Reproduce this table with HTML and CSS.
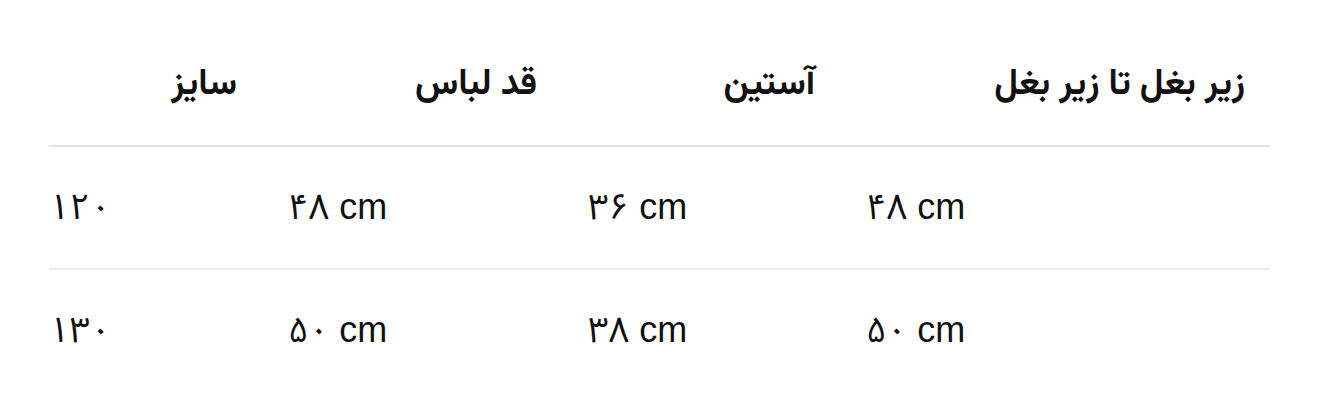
FILE: index.html
```html
<!DOCTYPE html>
<html lang="fa">
<head>
<meta charset="utf-8">
<link rel="stylesheet" href="styles.css">
</head>
<body>
<table class="size-table">
  <colgroup>
    <col class="c1"><col class="c2"><col class="c3"><col class="c4">
  </colgroup>
  <thead>
    <tr>
      <th>سایز</th>
      <th>قد لباس</th>
      <th>آستین</th>
      <th class="last">زیر بغل تا زیر بغل</th>
    </tr>
  </thead>
  <tbody>
    <tr>
      <td>۱۲۰</td>
      <td>۴۸ cm</td>
      <td>۳۶ cm</td>
      <td>۴۸ cm</td>
    </tr>
    <tr>
      <td>۱۳۰</td>
      <td>۵۰ cm</td>
      <td>۳۸ cm</td>
      <td>۵۰ cm</td>
    </tr>
  </tbody>
</table>
</body>
</html>
```
FILE: styles.css
```css
html, body {
  margin: 0;
  background: #ffffff;
}
body {
  padding: 24px 50px 0 49px;
}
.size-table {
  width: 1221px;
  border-collapse: collapse;
  table-layout: fixed;
  color: #111;
}
.c1 { width: 239px; }
.c2 { width: 300px; }
.c3 { width: 278px; }
.c4 { width: 404px; }
.size-table th {
  font-family: "Vazirmatn", "Noto Sans Arabic", "DejaVu Sans", sans-serif;
  font-weight: bold;
  font-size: 36px;
  line-height: 1;
  text-align: right;
  padding: 0 51px 0 0;
  height: 121px;
  border-bottom: 2px solid #e2e2e2;
  direction: rtl;
}
.size-table th.last {
  padding-right: 25px;
}
.size-table td {
  font-family: "Liberation Sans", "Noto Sans Arabic", "DejaVu Sans", sans-serif;
  font-size: 36px;
  text-align: left;
  padding: 0;
  height: 121px;
}
.size-table tbody tr:first-child td {
  border-bottom: 2px solid #ededed;
}
```
